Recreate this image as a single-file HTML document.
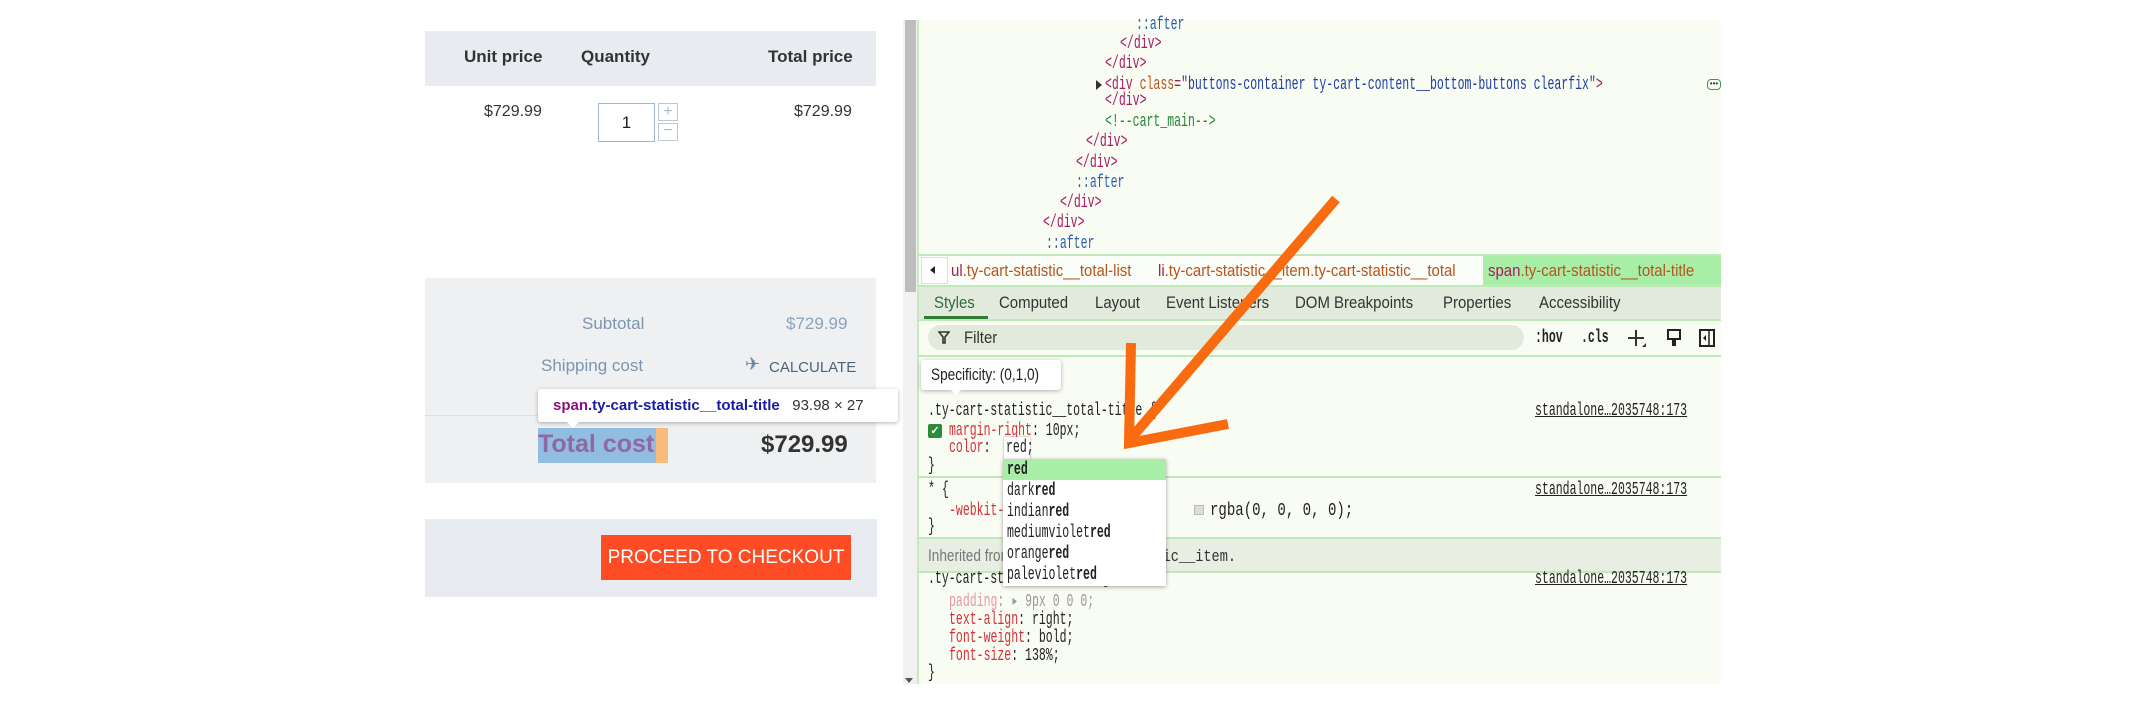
<!DOCTYPE html>
<html><head><meta charset="utf-8"><style>
*{margin:0;padding:0;box-sizing:border-box}
body{width:2147px;height:709px;background:#fff;position:relative;overflow:hidden;font-family:"Liberation Sans",sans-serif}
.a{position:absolute;white-space:nowrap}
.m{position:absolute;white-space:pre;font:18px/20px "Liberation Mono",monospace;transform:scaleX(.64);transform-origin:0 50%;color:#222}
.s{position:absolute;white-space:nowrap;font:17px/20px "Liberation Sans",sans-serif;transform:scaleX(.88);transform-origin:0 50%;color:#333}
.tg{color:#a8195f}.at{color:#b5551d}.av{color:#1f3f9e}.cm{color:#23863a}.ps{color:#2a5db0}
.pr{color:#d4303a}
.hl{position:absolute;left:917px;width:804px;height:2px;background:#bfe9b9}
</style></head><body>

<div class="a" style="left:425px;top:31px;width:451px;height:55px;background:#e8ecf0"></div>
<div class="a" style="left:464px;top:47px;font:bold 17px 'Liberation Sans';color:#333">Unit price</div>
<div class="a" style="left:581px;top:47px;font:bold 17px 'Liberation Sans';color:#333">Quantity</div>
<div class="a" style="left:768px;top:47px;font:bold 17px 'Liberation Sans';color:#333">Total price</div>
<div class="a" style="left:484px;top:103px;font:16px 'Liberation Sans';color:#333">$729.99</div>
<div class="a" style="left:794px;top:103px;font:16px 'Liberation Sans';color:#333">$729.99</div>
<div class="a" style="left:598px;top:103px;width:57px;height:39px;border:1px solid #9fb6cf;font:17px/37px 'Liberation Sans';text-align:center;color:#222">1</div>
<div class="a" style="left:658px;top:103px;width:20px;height:18px;border:1px solid #b8c8d8;color:#a9bccd;font:16px/16px 'Liberation Sans';text-align:center">+</div>
<div class="a" style="left:658px;top:123px;width:20px;height:18px;border:1px solid #b8c8d8;color:#a9bccd;font:16px/14px 'Liberation Sans';text-align:center">−</div>

<div class="a" style="left:425px;top:278px;width:451px;height:205px;background:#eef0f2"></div>
<div class="a" style="left:425px;top:415px;width:451px;height:1px;background:#dde1e5"></div>
<div class="a" style="left:582px;top:314px;font:17px 'Liberation Sans';color:#7d95ad">Subtotal</div>
<div class="a" style="left:786px;top:314px;font:17px 'Liberation Sans';color:#8aa3bb">$729.99</div>
<div class="a" style="left:541px;top:356px;font:17px 'Liberation Sans';color:#7d95ad">Shipping cost</div>
<div class="a" style="left:745px;top:354px;font:18px 'Liberation Sans';color:#6f86a0">✈</div>
<div class="a" style="left:769px;top:359px;font:15px 'Liberation Sans';color:#4f6378">CALCULATE</div>
<div class="a" style="left:538px;top:428px;width:118px;height:35px;background:#90bde0"></div>
<div class="a" style="left:656px;top:428px;width:12px;height:35px;background:#f8bb7c"></div>
<div class="a" style="left:538px;top:430px;font:bold 25px 'Liberation Sans';color:#8e6aa0">Total cost</div>
<div class="a" style="left:761px;top:431px;font:bold 24px 'Liberation Sans';color:#333">$729.99</div>
<div class="a" style="left:538px;top:389px;width:360px;height:33px;background:#fff;box-shadow:0 1px 4px rgba(0,0,0,.3);border-radius:3px"></div>
<div class="a" style="left:565px;top:420px;width:0;height:0;border-left:8px solid transparent;border-right:8px solid transparent;border-top:8px solid #fff"></div>
<div class="a" style="left:553px;top:396px;font:bold 15px/20px 'Liberation Sans';color:#881280">span<span style="color:#1a1aa6">.ty-cart-statistic__total-title</span> <span style="font-weight:normal;color:#333">&nbsp; 93.98 × 27</span></div>

<div class="a" style="left:425px;top:519px;width:452px;height:78px;background:#e8ecf1"></div>
<div class="a" style="left:601px;top:535px;width:250px;height:45px;background:#ff4c25;color:#fff;font:19px/45px 'Liberation Sans';text-align:center">PROCEED TO CHECKOUT</div>

<div class="a" style="left:903px;top:20px;width:15px;height:664px;background:#f1f1f1"></div>
<div class="a" style="left:905px;top:20px;width:11px;height:272px;background:#bdbdbd"></div>
<div class="a" style="left:905px;top:678px;width:0;height:0;border-left:4px solid transparent;border-right:4px solid transparent;border-top:5px solid #555"></div>

<div class="a" style="left:917px;top:20px;width:804px;height:664px;background:#f9fcf3;overflow:hidden"></div>
<div class="a" style="left:917px;top:20px;width:2px;height:664px;background:#c6e9c0"></div>
<div class="m ps" style="left:1136px;top:15px">::after</div>
<div class="m tg" style="left:1120px;top:34px">&lt;/div&gt;</div>
<div class="m tg" style="left:1105px;top:54px">&lt;/div&gt;</div>
<div class="a" style="left:1096px;top:80px;width:0;height:0;border-top:5px solid transparent;border-bottom:5px solid transparent;border-left:6px solid #333"></div>
<div class="m" style="left:1105px;top:75px"><span class="tg">&lt;div</span> <span class="at">class</span><span class="tg">=</span><span class="av">"buttons-container ty-cart-content__bottom-buttons clearfix"</span><span class="tg">&gt;</span></div>
<div class="a" style="left:1707px;top:79px;width:14px;height:11px;border:1px solid #3a9a4a;border-radius:4px;font:8px/8px sans-serif;color:#333;text-align:center">•••</div>
<div class="m tg" style="left:1105px;top:91px">&lt;/div&gt;</div>
<div class="m cm" style="left:1105px;top:112px">&lt;!--cart_main--&gt;</div>
<div class="m tg" style="left:1086px;top:132px">&lt;/div&gt;</div>
<div class="m tg" style="left:1076px;top:153px">&lt;/div&gt;</div>
<div class="m ps" style="left:1076px;top:173px">::after</div>
<div class="m tg" style="left:1060px;top:193px">&lt;/div&gt;</div>
<div class="m tg" style="left:1043px;top:213px">&lt;/div&gt;</div>
<div class="m ps" style="left:1046px;top:234px">::after</div>

<div class="hl" style="top:254px"></div>
<div class="a" style="left:919px;top:256px;width:802px;height:29px;background:#fbfdf8"></div>
<div class="a" style="left:921px;top:257px;width:27px;height:27px;background:#fff;border:1px solid #ddd"></div>
<div class="a" style="left:930px;top:266px;width:0;height:0;border-top:4px solid transparent;border-bottom:4px solid transparent;border-right:5px solid #222"></div>
<div class="a" style="left:1483px;top:256px;width:238px;height:29px;background:#a8eea6"></div>
<div class="s" style="left:951px;top:261px;color:#b5551d"><span class="tg">ul</span>.ty-cart-statistic__total-list</div>
<div class="s" style="left:1158px;top:261px;color:#b5551d"><span class="tg">li</span>.ty-cart-statistic__item.ty-cart-statistic__total</div>
<div class="s" style="left:1488px;top:261px;color:#b5551d"><span class="tg">span</span>.ty-cart-statistic__total-title</div>

<div class="hl" style="top:285px"></div>
<div class="a" style="left:919px;top:287px;width:802px;height:32px;background:#e2eadc"></div>
<div class="hl" style="top:319px"></div>
<div class="a" style="left:924px;top:316px;width:64px;height:3px;background:#2e7d32"></div>
<div class="s" style="left:934px;top:293px;color:#2e6b3a">Styles</div>
<div class="s" style="left:999px;top:293px">Computed</div>
<div class="s" style="left:1095px;top:293px">Layout</div>
<div class="s" style="left:1166px;top:293px">Event Listeners</div>
<div class="s" style="left:1295px;top:293px">DOM Breakpoints</div>
<div class="s" style="left:1443px;top:293px">Properties</div>
<div class="s" style="left:1539px;top:293px">Accessibility</div>

<div class="a" style="left:928px;top:325px;width:596px;height:25px;background:#e2eadc;border-radius:13px"></div>
<svg class="a" style="left:938px;top:331px" width="12" height="13" viewBox="0 0 12 13"><path d="M1 1h10L7 6v6H5V6z" fill="none" stroke="#333" stroke-width="1.6"/></svg>
<div class="s" style="left:964px;top:328px">Filter</div>
<div class="m" style="left:1535px;top:328px;font-weight:bold">:hov</div>
<div class="m" style="left:1581px;top:328px;font-weight:bold">.cls</div>
<svg class="a" style="left:1627px;top:328px" width="90" height="20" viewBox="0 0 90 20"><path d="M9 2v16M1 10h16" stroke="#333" stroke-width="2"/><path d="M15 19l4-4v4z" fill="#333"/><rect x="41" y="2" width="12" height="9" fill="none" stroke="#222" stroke-width="2"/><rect x="45" y="11" width="4" height="7" fill="#222"/><rect x="73" y="2" width="14" height="16" fill="none" stroke="#222" stroke-width="2"/><path d="M82 3v14" stroke="#222" stroke-width="1.5"/><path d="M79 7l-3 3 3 3z" fill="#222"/></svg>
<div class="hl" style="top:355px"></div>

<div class="a" style="left:921px;top:360px;width:140px;height:30px;background:#fff;box-shadow:0 1px 4px rgba(0,0,0,.3);border-radius:3px"></div>
<div class="a" style="left:950px;top:389px;width:0;height:0;border-left:6px solid transparent;border-right:6px solid transparent;border-top:6px solid #fff"></div>
<div class="s" style="left:931px;top:365px;color:#222;transform:scaleX(.8)">Specificity: (0,1,0)</div>

<div class="m" style="left:928px;top:401px">.ty-cart-statistic__total-title {</div>
<div class="a" style="left:928px;top:424px;width:14px;height:14px;background:#2e8b3a;border-radius:2px;color:#fff;font:bold 11px/14px sans-serif;text-align:center">✓</div>
<div class="m" style="left:949px;top:421px"><span class="pr">margin-right</span>: 10px;</div>
<div class="m" style="left:949px;top:438px"><span class="pr">color</span>: </div>
<div class="a" style="left:1004px;top:437px;width:26px;height:22px;background:#fff;box-shadow:0 0 2px rgba(0,0,0,.4)"></div>
<div class="m" style="left:1006px;top:438px">red;</div>
<div class="m" style="left:928px;top:456px">}</div>
<div class="m" style="left:1535px;top:401px;text-decoration:underline">standalone…2035748:173</div>
<div class="hl" style="top:476px"></div>

<div class="m" style="left:928px;top:480px">* {</div>
<div class="m" style="left:949px;top:501px"><span class="pr">-webkit-tap-highlight-color</span>:</div>
<div class="a" style="left:1194px;top:505px;width:10px;height:10px;background:#ddd;border:1px solid #bbb"></div>
<div class="m" style="left:1210px;top:501px;transform:scaleX(.78)">rgba(0, 0, 0, 0);</div>
<div class="m" style="left:928px;top:517px">}</div>
<div class="m" style="left:1535px;top:480px;text-decoration:underline">standalone…2035748:173</div>
<div class="hl" style="top:537px"></div>
<div class="a" style="left:919px;top:539px;width:802px;height:32px;background:#e8efe2"></div>
<div class="s" style="left:928px;top:546px;color:#777;transform:scaleX(.8)">Inherited from <span style="font-family:'Liberation Mono';color:#333">li.ty-cart-statistic__item.</span></div>
<div class="hl" style="top:571px"></div>

<div class="m" style="left:928px;top:569px">.ty-cart-statistic__item {</div>
<div class="m" style="left:1535px;top:569px;text-decoration:underline">standalone…2035748:173</div>
<div class="m" style="left:949px;top:592px;color:#999"><span style="color:#e79a9f">padding</span>: ▸ 9px 0 0 0;</div>
<div class="m" style="left:949px;top:610px"><span class="pr">text-align</span>: right;</div>
<div class="m" style="left:949px;top:628px"><span class="pr">font-weight</span>: bold;</div>
<div class="m" style="left:949px;top:646px"><span class="pr">font-size</span>: 138%;</div>
<div class="m" style="left:928px;top:663px">}</div>

<div class="a" style="left:1003px;top:459px;width:163px;height:127px;background:#fff;box-shadow:0 1px 4px rgba(0,0,0,.35)"></div>
<div class="a" style="left:1003px;top:459px;width:163px;height:21px;background:#a8eea6"></div>
<div class="m" style="left:1007px;top:460px;font-weight:bold">red</div>
<div class="m" style="left:1007px;top:481px">dark<b>red</b></div>
<div class="m" style="left:1007px;top:502px">indian<b>red</b></div>
<div class="m" style="left:1007px;top:523px">mediumviolet<b>red</b></div>
<div class="m" style="left:1007px;top:544px">orange<b>red</b></div>
<div class="m" style="left:1007px;top:565px">paleviolet<b>red</b></div>

<div class="a" style="left:1721px;top:0;width:426px;height:709px;background:#fff"></div>

<svg class="a" style="left:0;top:0" width="2147" height="709" viewBox="0 0 2147 709"><g stroke="#f96b10" stroke-width="10" fill="none" stroke-linecap="butt"><path d="M1336 199L1133 436"/><path d="M1131 343L1129 443L1228 424"/></g></svg>
</body></html>
